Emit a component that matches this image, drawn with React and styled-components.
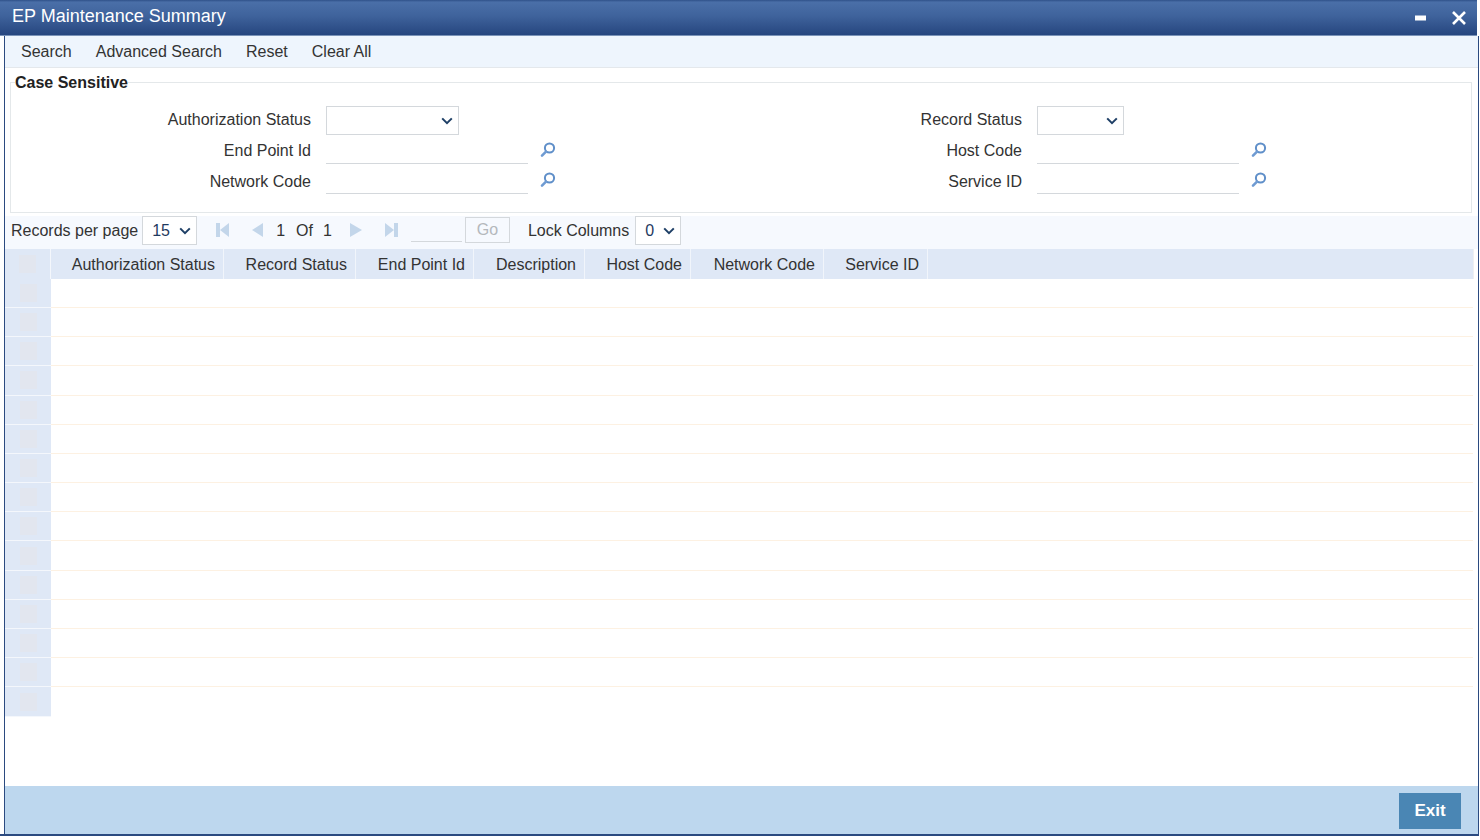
import React from 'react';
import styled, { createGlobalStyle } from 'styled-components';

const Global = createGlobalStyle`
  html, body { margin: 0; padding: 0; background: #fff; }
  body { font-family: "Liberation Sans", Arial, sans-serif; font-size: 16px; color: #2b2b2b; }
  * { box-sizing: border-box; }
`;

const Win = styled.div`
  width: 1479px; height: 836px; display: flex; flex-direction: column;
  border-bottom: 2px solid #2b4a80; position: relative;
`;
const TitleBar = styled.header`
  height: 36px; flex: none; display: flex; align-items: center; justify-content: space-between;
  width: 1477px; padding: 0 10px 2px 12px;
  background: linear-gradient(#2f5189 0, #4a6fa8 6%, #3f639c 45%, #26467f 100%);
  border-bottom: 1px solid #7a93b8;
`;
const Title = styled.h1`
  margin: 0; font-size: 18px; font-weight: 400; color: #fff;
`;
const WinButtons = styled.div`
  display: flex; align-items: center; gap: 24px; margin-top: 2px;
`;
const Body = styled.div`
  flex: 1; min-height: 0; margin-left: 4px; display: flex; flex-direction: column;
  border-left: 1px solid #2b4a80; border-right: 1px solid #2b4a80;
`;
const Toolbar = styled.nav`
  height: 32px; flex: none; display: flex; align-items: center; gap: 24px; padding: 1px 0 0 16px;
  background: #eef5fd; border-bottom: 1px solid #e4e8ec;
`;
const ToolItem = styled.span`
  color: #333;
`;
const Fieldset = styled.fieldset`
  margin: 4px 6px 0 5px; padding: 0; height: 141px; flex: none; min-width: 0;
  border: 1px solid #e4e8ea;
  display: grid; grid-template-columns: 711px 1fr; align-content: start;
`;
const Legend = styled.legend`
  padding: 2px 0 0; margin-left: 4px; font-weight: 700; color: #222; line-height: 18px;
`;
const FieldCol = styled.div`
  display: flex; flex-direction: column; padding-top: 14px;
`;
const Field = styled.div`
  height: 29px; display: flex; align-items: center; margin-bottom: ${p => p.$mb || 0}px;
`;
const Label = styled.label`
  width: 300px; align-self: flex-start; padding-top: ${p => p.$top}px; text-align: right; margin-right: 15px; flex: none; color: #333; line-height: 18px;
`;
const Select = styled.select`
  appearance: none; height: 29px; width: ${p => p.$w}px; margin-left: ${p => p.$ml || 0}px; font: inherit; color: #1f3a5f;
  border: 1px solid #d4d8dc; border-radius: 0; background-color: #fff; padding: 0 0 0 9px;
  background-image: url("data:image/svg+xml,%3Csvg xmlns='http://www.w3.org/2000/svg' width='12' height='8' viewBox='0 0 12 8'%3E%3Cpath d='M1.2 1.4 6 6.2l4.8-4.8' fill='none' stroke='%231e3f66' stroke-width='2'/%3E%3C/svg%3E");
  background-repeat: no-repeat; background-position: right 5px center;
`;
const Input = styled.input`
  width: 202px; height: 29px; border: 0; border-bottom: 1px solid #d4d8dc; background: transparent; outline: 0; font: inherit;
`;
const SearchBtn = styled.button`
  margin: 1px 0 0 12px; width: 16px; height: 16px; padding: 0; border: 0; background: none; display: flex;
`;
const Pager = styled.div`
  margin-top: 3px; height: 33px; flex: none; display: flex; align-items: flex-start; padding: 0 0 0 6px; background: #f6f9fe;
`;
const PagerText = styled.span`
  color: #333; margin-left: ${p => p.$ml || 0}px; padding-top: 6px; line-height: 18px;
`;
const PageBtn = styled.button`
  width: 16px; height: 16px; margin-top: 6px; padding: 0; border: 0; background: none; display: flex; margin-left: ${p => p.$ml}px;
`;
const PageInput = styled.input`
  width: 51px; height: 25px; margin: 1px 0 0 12px; border: 0; border-bottom: 1px solid #d4d8dc; background: transparent;
`;
const GoBtn = styled.button`
  width: 45px; height: 26px; margin: 1px 0 0 3px; font: inherit; color: #b4b8bc; background: #f6f9fe; border: 1px solid #d4d8dc; padding: 0;
`;
const TableWrap = styled.div`
  flex: none; width: 1468px;
`;
const HeadRow = styled.div`
  display: flex; height: 29.8px; background: #dfe8f6; box-shadow: 1px 0 0 #eef0f2;
`;
const CornerCell = styled.div`
  width: 46px; flex: none; border-right: 1px solid #f4f7fc; display: flex; align-items: center; justify-content: center;
`;
const Ghost = styled.span`
  width: 17px; height: 18px; background: #e2e6ef; display: block;
`;
const HeadCell = styled.div`
  width: ${p => p.$w}px; flex: none; text-align: right; padding-right: 8px; line-height: 31px; color: #333;
  border-right: 1px solid #f1f5fb;
`;
const Row = styled.div`
  display: flex; height: 29.2px;
`;
const RowHead = styled.div`
  width: 46px; flex: none; background: #dfe8f6; border-bottom: 1px solid #f4f7fc; display: flex; align-items: center; justify-content: center;
`;
const RowBody = styled.div`
  flex: 1; border-bottom: 1px solid ${p => p.$last ? 'transparent' : '#fdf1e2'};
`;
const Spacer = styled.div`
  flex: 1;
`;
const Footer = styled.footer`
  height: 48px; flex: none; display: flex; align-items: flex-start; justify-content: flex-end; padding: 7px 17px 0 0; background: #bdd7ee;
`;
const ExitBtn = styled.button`
  width: 62px; height: 36px; border: 0; padding: 0; background: #4a86b4; color: #fff; font: 700 17px "Liberation Sans", Arial, sans-serif;
`;

const Lens = () => (
  <svg width="16" height="16" viewBox="0 0 16 16" fill="none">
    <circle cx="9.5" cy="6" r="4.6" stroke="#5f8fc9" strokeWidth="2" />
    <path d="M6 9.6 2 13.6" stroke="#6f9bd2" strokeWidth="2.6" strokeLinecap="round" />
  </svg>
);
const Minimize = () => (
  <svg width="12" height="12" viewBox="0 0 12 12"><rect x="0" y="3.5" width="11" height="5" fill="#fff" /></svg>
);
const Close = () => (
  <svg width="16" height="16" viewBox="0 0 16 16"><path d="M2 2l12 12M14 2 2 14" stroke="#fff" strokeWidth="2.6" /></svg>
);
const PageIcon = ({ kind }) => {
  const c = '#c3d6ea';
  const shapes = {
    first: <><rect x="1" y="1" width="4" height="14" fill={c} /><path d="M14 1v14L5 8z" fill={c} /></>,
    prev: <path d="M15 1v14L4 8z" fill={c} />,
    next: <path d="M3 1v14l12-7z" fill={c} />,
    last: <><rect x="11" y="1" width="4" height="14" fill={c} /><path d="M2 1v14l9-7z" fill={c} /></>,
  };
  return <svg width="16" height="16" viewBox="0 0 16 16">{shapes[kind]}</svg>;
};

const columns = [
  ['Authorization Status', 173], ['Record Status', 132], ['End Point Id', 118], ['Description', 111],
  ['Host Code', 106], ['Network Code', 133], ['Service ID', 104],
];
const rows = Array.from({ length: 15 }, (_, i) => i);

function SearchField({ label, top, mb }) {
  return (
    <Field $mb={mb}>
      <Label $top={top}>{label}</Label>
      <Input />
      <SearchBtn aria-label="Search"><Lens /></SearchBtn>
    </Field>
  );
}

export default function App() {
  return (
    <Win>
      <Global />
      <TitleBar>
        <Title>EP Maintenance Summary</Title>
        <WinButtons><Minimize /><Close /></WinButtons>
      </TitleBar>
      <Body>
        <Toolbar>
          {['Search', 'Advanced Search', 'Reset', 'Clear All'].map(t => <ToolItem key={t}>{t}</ToolItem>)}
        </Toolbar>
        <Fieldset>
          <Legend>Case Sensitive</Legend>
          <FieldCol>
            <Field><Label $top={5}>Authorization Status</Label><Select $w={133} /></Field>
            <SearchField label="End Point Id" top={7} mb={1} />
            <SearchField label="Network Code" top={8} />
          </FieldCol>
          <FieldCol>
            <Field><Label $top={5}>Record Status</Label><Select $w={87} /></Field>
            <SearchField label="Host Code" top={7} mb={1} />
            <SearchField label="Service ID" top={8} />
          </FieldCol>
        </Fieldset>
        <Pager>
          <PagerText>Records per page</PagerText>
          <Select $w={55} $ml={4} defaultValue="15"><option>15</option></Select>
          <PageBtn $ml={18}><PageIcon kind="first" /></PageBtn>
          <PageBtn $ml={17}><PageIcon kind="prev" /></PageBtn>
          <PagerText $ml={12}>1</PagerText>
          <PagerText $ml={11}>Of</PagerText>
          <PagerText $ml={10}>1</PagerText>
          <PageBtn $ml={15}><PageIcon kind="next" /></PageBtn>
          <PageBtn $ml={20}><PageIcon kind="last" /></PageBtn>
          <PageInput />
          <GoBtn>Go</GoBtn>
          <PagerText $ml={18}>Lock Columns</PagerText>
          <Select $w={46} $ml={6} defaultValue="0"><option>0</option></Select>
        </Pager>
        <TableWrap>
          <HeadRow>
            <CornerCell><Ghost /></CornerCell>
            {columns.map(([t, w]) => <HeadCell key={t} $w={w}>{t}</HeadCell>)}
          </HeadRow>
          {rows.map(i => (
            <Row key={i}>
              <RowHead><Ghost /></RowHead>
              <RowBody $last={i === 14} />
            </Row>
          ))}
        </TableWrap>
        <Spacer />
        <Footer><ExitBtn>Exit</ExitBtn></Footer>
      </Body>
    </Win>
  );
}
